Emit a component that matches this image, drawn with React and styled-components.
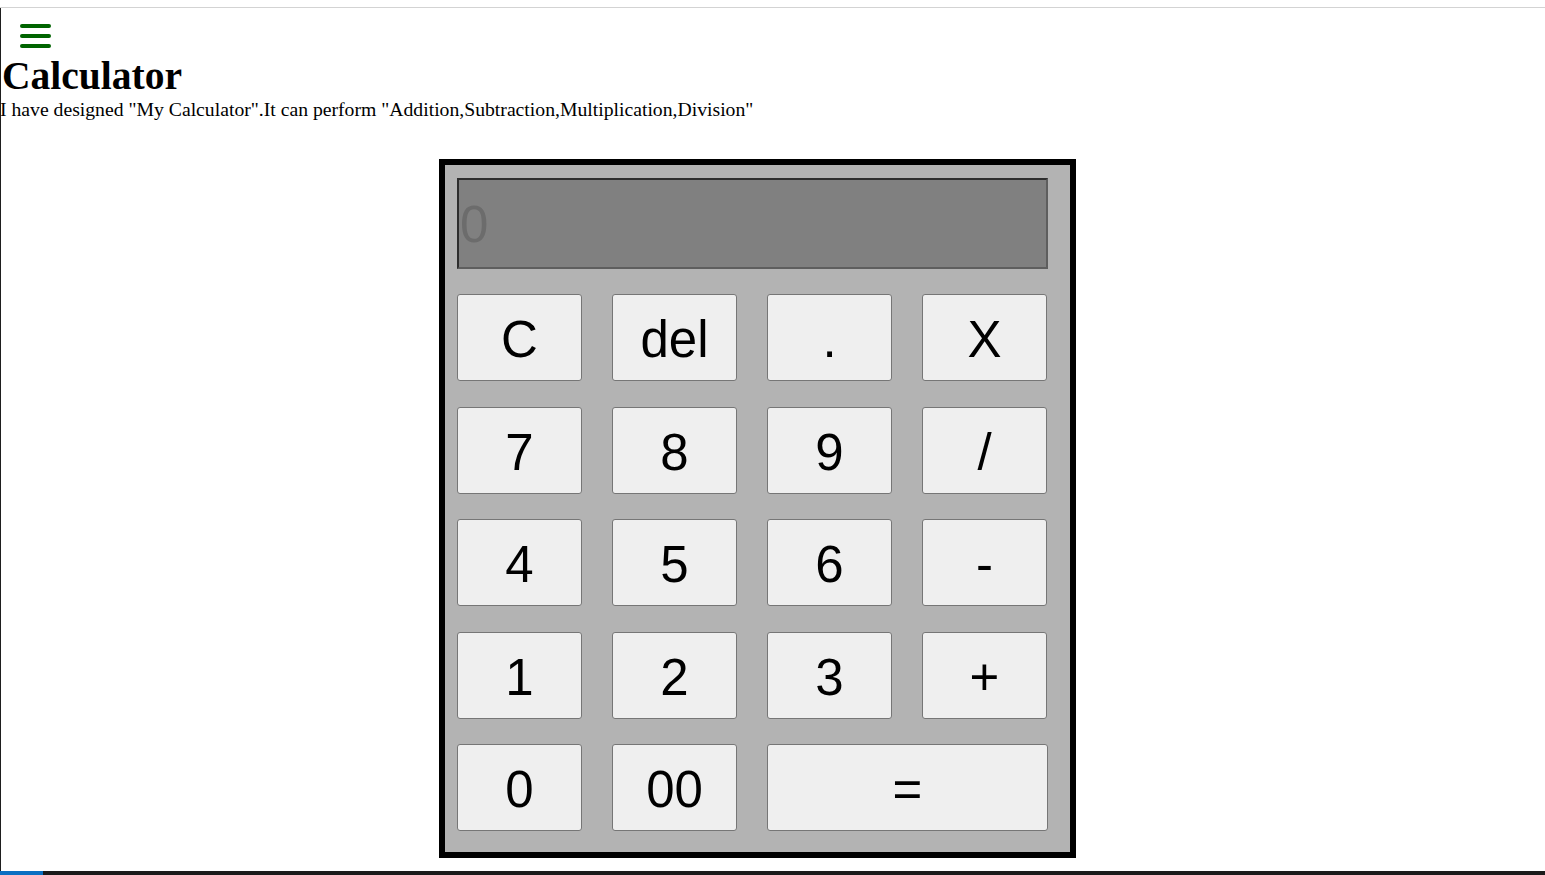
import React from "react";
import styled, { createGlobalStyle } from "styled-components";

const Global = createGlobalStyle`
  html, body { margin: 0; padding: 0; background: #fff; }
  body { font-family: "Liberation Serif", "Times New Roman", serif; overflow: hidden; }
`;

const Screen = styled.div`
  width: 1545px;
  height: 875px;
  display: flex;
  flex-direction: column;
  overflow: hidden;
`;

const TopStrip = styled.div`
  height: 7px;
  flex: none;
  border-bottom: 1px solid #d3d3d3;
`;

const Page = styled.main`
  flex: 1;
  border-left: 1px solid #1e1e1e;
  display: flex;
  flex-direction: column;
`;

const MenuButton = styled.div`
  margin: 16px 0 0 19px;
  width: 31px;
  display: flex;
  flex-direction: column;
  gap: 6px;
`;

const Bar = styled.span`
  display: block;
  height: 4px;
  border-radius: 2px;
  background: #006400;
`;

const Title = styled.h1`
  margin: 6px 0 0 1px;
  font-size: 39.5px;
  line-height: 44px;
  font-weight: bold;
  color: #000;
`;

const Intro = styled.p`
  margin: 0 0 0 -1px;
  font-size: 19.7px;
  line-height: 23px;
  color: #000;
`;

const CalcArea = styled.div`
  padding: 38px 0 0 438px;
`;

const Calculator = styled.div`
  border: 6px solid #000;
  background: #b3b3b3;
  padding: 13px 22px 21px 12px;
  box-sizing: content-box;
  width: 591px;
  display: flex;
  flex-direction: column;
  gap: 25px;
`;

const Display = styled.div`
  height: 91px;
  box-sizing: border-box;
  background: #808080;
  border-top: 2px solid #2e2e2e;
  border-left: 2px solid #2e2e2e;
  border-right: 2px solid #5e5e5e;
  border-bottom: 2px solid #5e5e5e;
  font-family: "Liberation Sans", Arial, sans-serif;
  font-size: 51px;
  color: #6c6c6c;
  display: flex;
  align-items: center;
  padding-left: 1px;
  padding-top: 2px;
`;

const Keys = styled.div`
  display: grid;
  grid-template-columns: repeat(4, 125px);
  grid-auto-rows: 87px;
  column-gap: 30px;
  row-gap: 25.5px;
`;

const Key = styled.button`
  grid-column: span ${(p) => p.$span || 1};
  margin: 0;
  padding: 4px 0 0;
  background: #efefef;
  border: 1px solid #767676;
  border-radius: 3px;
  font-family: "Liberation Sans", Arial, sans-serif;
  font-size: 51px;
  color: #000;
  display: flex;
  align-items: center;
  justify-content: center;
  ${(p) => p.$span === 2 && "margin-right: -1px;"}
`;

const Taskbar = styled.div`
  height: 4px;
  flex: none;
  background: #1b1b1b;
  display: flex;
`;

const StartTile = styled.div`
  width: 43px;
  background: #0a6fc2;
`;

const keys = [
  ["C"], ["del"], ["."], ["X"],
  ["7"], ["8"], ["9"], ["/"],
  ["4"], ["5"], ["6"], ["-"],
  ["1"], ["2"], ["3"], ["+"],
  ["0"], ["00"], ["=", 2],
];

export default function App() {
  return (
    <>
      <Global />
      <Screen>
        <TopStrip />
        <Page>
          <MenuButton aria-label="menu">
            <Bar />
            <Bar />
            <Bar />
          </MenuButton>
          <Title>Calculator</Title>
          <Intro>
            I have designed "My Calculator".It can perform
            "Addition,Subtraction,Multiplication,Division"
          </Intro>
          <CalcArea>
            <Calculator>
              <Display>0</Display>
              <Keys>
                {keys.map(([label, span]) => (
                  <Key key={label} $span={span}>
                    {label}
                  </Key>
                ))}
              </Keys>
            </Calculator>
          </CalcArea>
        </Page>
        <Taskbar>
          <StartTile />
        </Taskbar>
      </Screen>
    </>
  );
}
